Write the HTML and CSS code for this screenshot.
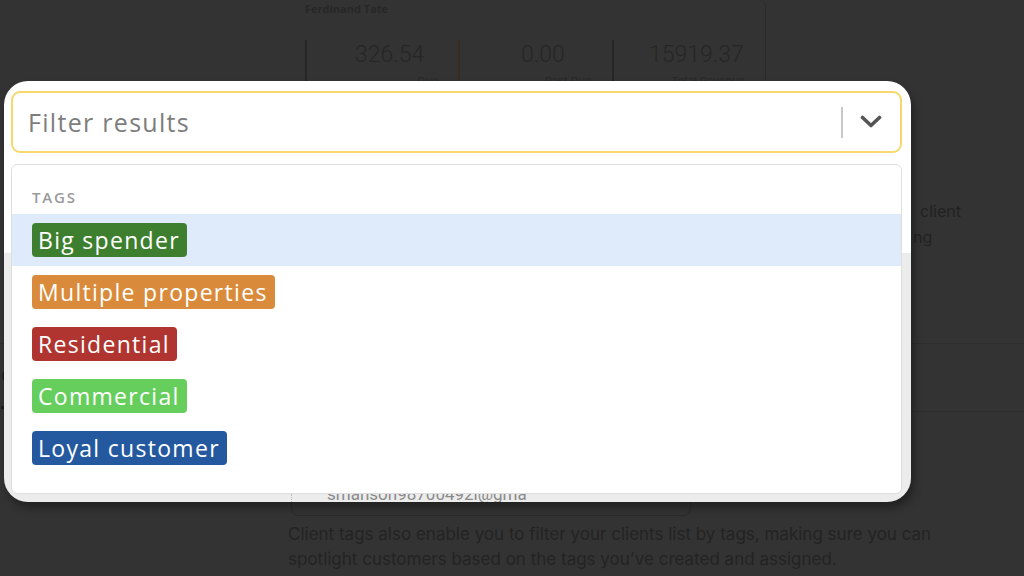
FILE: index.html
```html
<!DOCTYPE html>
<html lang="en">
	<head>
		<title>Filter clients</title>
		<link rel="stylesheet" href="styles.css">
	</head>
	<body>
		<div class="page">
			<div class="client-card">
				<div class="client-name">Ferdinand Tate</div>
				<div class="stats">
					<div class="stat"><div class="num">326.54</div><div class="lbl">Due</div></div>
					<div class="stat brown"><div class="num">0.00</div><div class="lbl">Past Due</div></div>
					<div class="stat"><div class="num">15919.37</div><div class="lbl">Total Revenue</div></div>
				</div>
			</div>
			<div class="side-note">
				<div class="l1">client</div>
				<div class="l2">ng</div>
			</div>
			<div class="tabs"><span class="tab">c</span></div>
			<div class="email-field"></div>
			<p class="page-text">Client tags also enable you to filter your clients list by tags, making sure you can<br>spotlight customers based on the tags you’ve created and assigned.</p>
		</div>

		<div class="spotlight">
			<div class="select">
				<span class="placeholder">Filter results</span>
				<span class="sep"></span>
				<svg class="chev" width="22" height="14" viewBox="0 0 22 14"><path d="M2.5 2.5 L11 10.5 L19.5 2.5" fill="none" stroke="#555" stroke-width="3.6" stroke-linecap="round" stroke-linejoin="round"/></svg>
			</div>
			<div class="menu">
				<div class="menu-head">TAGS</div>
				<div class="opt active"><span class="tag green">Big spender</span></div>
				<div class="opt"><span class="tag orange">Multiple properties</span></div>
				<div class="opt"><span class="tag red">Residential</span></div>
				<div class="opt"><span class="tag lime">Commercial</span></div>
				<div class="opt"><span class="tag blue">Loyal customer</span></div>
			</div>
			<div class="peek"><span>smanson98700492l@gmail</span></div>
		</div>
	</body>
</html>
```

FILE: styles.css
```css
body, html {margin:0;padding:0;background:#333;font-family:Inter,Roboto,"Liberation Sans",sans-serif;overflow:hidden;height:576px;}
.page {position:relative;color:#232323;}

/* dimmed page behind */
.client-card {margin-left:305px;width:460px;height:100px;border-right:1px solid #2a2a2a;border-top-right-radius:6px;}
.client-name {font-family:"Open Sans",sans-serif;font-weight:700;font-size:11px;padding-top:1px;color:#272727;}
.stats {display:flex;margin-top:24px;}
.stat {flex:1;border-left:2px solid #262626;height:60px;text-align:center;padding-left:14px;}
.stat.brown {border-left-color:#3b2a1e;}
.num {font-family:Roboto,sans-serif;font-size:23px;line-height:30px;color:#262626;font-weight:300;}
.lbl {font-size:11px;text-align:right;padding-right:20px;color:#282828;margin-top:4px;}
.side-note {margin-left:913px;margin-top:98px;font-size:16px;line-height:26px;color:#222;}
.side-note .l1 {padding-left:7px;}
.tabs {margin-top:93px;height:67px;border-top:1px solid #2e2e2e;border-bottom:1px solid #2e2e2e;}
.tab {display:inline-block;font-size:21px;line-height:62px;margin-left:1px;border-bottom:3px solid #1f1f1f;padding-right:4px;color:#1c1c1c;}
.email-field {margin-left:291px;margin-top:52px;width:398px;height:50px;border:1px solid #2a2a2a;border-radius:8px;}
.page-text {margin:6px 0 0 288px;font-size:17px;line-height:25px;color:#232323;}

/* spotlight dropdown */
.spotlight {position:absolute;left:4px;top:81px;width:907px;height:421px;box-sizing:border-box;padding:10px 9px 0 7px;border-radius:24px;background:linear-gradient(#fff 0 172px,#ececec 172px);box-shadow:3px 6px 8px rgba(0,0,0,0.35);overflow:hidden;}
.select {display:flex;align-items:center;height:62px;box-sizing:border-box;border:2px solid #f6d86c;border-radius:9px;background:#fff;padding:0 18px 0 15px;}
.placeholder {flex:1;font-family:"Open Sans",sans-serif;font-size:25px;letter-spacing:1.3px;color:#7d7d7d;}
.sep {width:2px;height:31px;background:#c8c8c8;margin-right:17px;}
.chev {display:block;}
.menu {margin-top:11px;height:330px;box-sizing:border-box;border:1px solid #dedede;border-radius:6px;background:#fff;}
.menu-head {padding:24px 20px 9px;font-family:"Open Sans",sans-serif;font-size:15px;font-weight:600;line-height:16px;letter-spacing:1.8px;color:#9a9a9a;}
.opt {height:52px;box-sizing:border-box;padding:9px 20px;}
.opt.active {background:#dfeafb;}
.tag {display:inline-block;height:34px;line-height:34px;padding:0 7px 0 6px;border-radius:4px;color:#fff;font-family:"Open Sans",sans-serif;font-size:23px;font-weight:500;letter-spacing:1.3px;}
.green {background:#3d7f2f;}
.orange {background:#d98b3b;}
.red {background:#b03530;}
.lime {background:#66ce5d;}
.blue {background:#24599f;}
.peek {height:8px;overflow:hidden;margin-left:280px;border-left:1px dotted #bbb;}
.peek span {display:block;margin:-10px 0 0 35px;width:200px;overflow:hidden;white-space:nowrap;font-family:Roboto,sans-serif;font-size:17px;line-height:20px;color:#8a8a8a;}
```
